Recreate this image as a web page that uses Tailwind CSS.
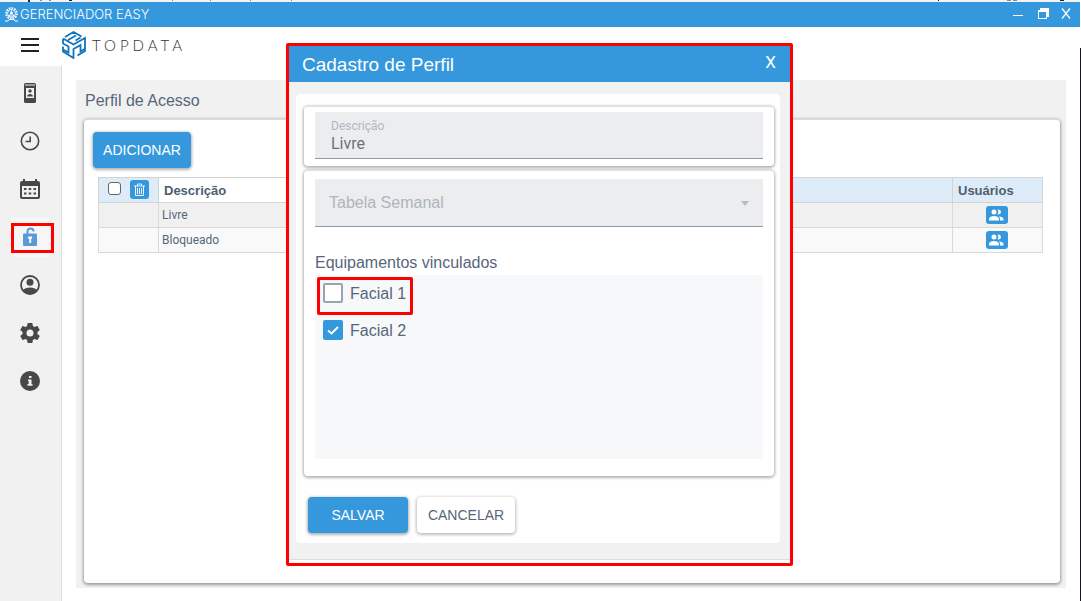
<!DOCTYPE html>
<html lang="pt-BR">
<head>
    <meta charset="UTF-8">
    <meta name="viewport" content="width=device-width, initial-scale=1.0">
    <title>Gerenciador Easy</title>
    <script src="https://cdn.jsdelivr.net/npm/@tailwindcss/browser@4"></script>
</head>
<body class="relative flex flex-col min-h-screen pr-px bg-white text-[#56677a] font-['Liberation_Sans',Arial,sans-serif]">
    <!-- strip of the window behind -->
    <svg class="block h-0.5 w-full bg-[#f4f4f4]" aria-hidden="true">
        <path d="M28 0h2v2h-2zM69 0h3v1h-3zM938 0h1v1h-1zM1060 0h4v1h-4z" fill="#223"/>
        <path d="M40 0h2v1h-2zM49 0h2v1h-2zM172 0h1v1h-1zM210 0h1v1h-1zM250 0h1v1h-1zM291 0h1v1h-1zM1007 0h4v1h-4zM1013 0h4v1h-4z" fill="#889"/>
    </svg>
    <div class="absolute right-0 top-12 bottom-0 w-px bg-[#15151f]"></div>

    <div class="flex items-center justify-between h-[25px] pl-1 pr-2 bg-[#3598dc] text-white">
        <div class="flex items-center gap-px">
            <svg class="size-[15px]" viewBox="0 0 15 15" fill="none" stroke="currentColor">
                <circle cx="7.5" cy="6.5" r="5.5" stroke-width="1.6" stroke-dasharray="1.8 1"/>
                <circle cx="7.5" cy="6.5" r="4"/>
                <path d="M7.5 3.5v2M5 9l1.5-2M10 9L8.500 7M5 9h5"/>
                <circle cx="7.500" cy="6" r="1" fill="currentColor"/>
                <path d="M1 14h3l1-1.500h5l1 1.500h3"/>
            </svg>
            <h1 class="pb-0.5 text-[13px] leading-4 font-light font-[Inter,sans-serif]">GERENCIADOR EASY</h1>
        </div>
        <div class="flex items-center gap-3 pb-0.5">
            <button type="button" aria-label="Minimizar" class="pr-[3px]"><svg class="block w-2.5 h-3" viewBox="0 0 10 12"><path d="M0 7.500h10" stroke="currentColor"/></svg></button>
            <button type="button" aria-label="Restaurar"><svg class="block w-[11px] h-3" viewBox="0 0 11 12"><path d="M2 0h9v9h-2v2H0V2h2zM1 4v6h7V4z" fill="currentColor" fill-rule="evenodd"/></svg></button>
            <button type="button" aria-label="Fechar"><svg class="block size-[11px]" viewBox="0 0 11 11"><path d="M1 .5l8 10M9 .5l-8 10" stroke="currentColor" stroke-width="1.300"/></svg></button>
        </div>
    </div>

    <header class="flex items-center gap-[22px] h-[39px] pl-[21px] pb-[3px]">
        <button type="button" aria-label="Menu" class="text-[#222]">
            <svg class="block w-[18px] h-3.5" viewBox="0 0 18 14"><path d="M0 1h18M0 7h18M0 13h18" stroke="currentColor" stroke-width="2"/></svg>
        </button>
        <div class="flex items-center gap-1.5">
            <svg class="w-[25px] h-7" viewBox="0 0 25 28" fill="none" stroke="#0f75bc" stroke-width="1.800">
                <path d="M4 6l8.500-5 8 4.500M2 8v4.500l5.500 3v6L2 18.500M2 15.500v5L12.500 27v-9.500M2 7.500l10.500 6L24 7v13l-7.500 4.500M7 9l8-4.500M12.500 18l7-4v6.500l4-2.500M14.500 9.500l5-3"/>
            </svg>
            <span class="text-[15px] leading-5 font-light tracking-[4px] text-[#333] font-[Lato,sans-serif]">TOPDATA</span>
        </div>
    </header>

    <div class="flex flex-1">
        <nav class="w-[62px] shrink-0 bg-[#f1f1f1] border-r border-[#dcdcdc] text-[#484848]">
            <ul class="flex flex-col items-center gap-2 pt-[7px] pr-px">
                <li><a href="#" aria-label="Cadastro" class="flex items-center justify-center size-10 rounded">
                    <svg class="size-6" viewBox="0 0 24 24" fill="currentColor" fill-rule="evenodd"><path d="M7.500 2h9A1.500 1.500 0 0 1 18 3.500v17a1.500 1.500 0 0 1-1.500 1.500h-9A1.500 1.500 0 0 1 6 20.500v-17A1.500 1.500 0 0 1 7.500 2zM7 3.500v1h10v-1zM8 7v10h8V7z"/><circle cx="12" cy="10" r="1.700"/><path d="M9 15.500c0-3.500 6-3.500 6 0z"/></svg>
                </a></li>
                <li><a href="#" aria-label="Horários" class="flex items-center justify-center size-10 rounded">
                    <svg class="size-6" viewBox="0 0 24 24" fill="none" stroke="currentColor"><circle cx="12" cy="12" r="8.700" stroke-width="1.600"/><path d="M12.200 7.500v5H7.500" stroke-width="1.600"/></svg>
                </a></li>
                <li><a href="#" aria-label="Calendário" class="flex items-center justify-center size-10 rounded">
                    <svg class="size-6" viewBox="0 0 24 24" fill="currentColor" fill-rule="evenodd"><path d="M5 2h2v2h10V2h2v2h1a2 2 0 0 1 2 2v14a2 2 0 0 1-2 2H4a2 2 0 0 1-2-2V6a2 2 0 0 1 2-2h1zM4 9v11h16V9z"/><path d="M6 11h2.500v2H6zM10.700 11h2.500v2h-2.500zM15.500 11H18v2h-2.500zM6 15.500h2.500v2H6zM10.700 15.500h2.500v2h-2.500zM15.500 15.500H18v2h-2.500z"/></svg>
                </a></li>
                <li class="relative"><a href="#" aria-label="Acesso" class="flex items-center justify-center size-10 rounded bg-[#f6f6f6] text-[#5b9bd5]">
                    <svg class="size-6" viewBox="0 0 24 24" fill="currentColor" fill-rule="evenodd"><path d="M6 8.500h2.500V6.500a4 4 0 0 1 8 0h-2a2 2 0 0 0-4 0v2H18a1 1 0 0 1 1 1V20a1 1 0 0 1-1 1H6a1 1 0 0 1-1-1V9.500a1 1 0 0 1 1-1zM10 11.500v2l1.200.5v4h2V14l.8-.5v-2z"/></svg>
                </a>
                    <div class="absolute left-px top-1.5 w-[43px] h-[30px] border-3 border-[#f00] pointer-events-none"></div>
                </li>
                <li><a href="#" aria-label="Usuário" class="flex items-center justify-center size-10 rounded">
                    <svg class="size-6" viewBox="0 0 24 24"><circle cx="12" cy="12" r="9" fill="none" stroke="currentColor" stroke-width="1.800"/><circle cx="12" cy="9.300" r="3.500" fill="currentColor"/><path d="M4.500 17.500c3-4 12-4 15 0-3 5-12 5-15 0z" fill="currentColor"/></svg>
                </a></li>
                <li><a href="#" aria-label="Configurações" class="flex items-center justify-center size-10 rounded">
                    <svg class="size-6" viewBox="0 0 24 24" fill="currentColor"><path d="M12 15.500A3.500 3.500 0 0 1 8.500 12 3.500 3.500 0 0 1 12 8.500a3.500 3.500 0 0 1 3.500 3.500 3.500 3.500 0 0 1-3.500 3.500m7.430-2.530c.04-.32.070-.64.070-.970s-.030-.660-.070-1l2.110-1.630c.19-.15.24-.42.12-.64l-2-3.460c-.12-.22-.39-.31-.61-.22l-2.490 1c-.52-.39-1.060-.73-1.690-.98l-.37-2.650A.506.506 0 0 0 14 2h-4c-.25 0-.46.18-.5.42l-.37 2.650c-.63.25-1.170.59-1.690.98l-2.490-1c-.22-.09-.49 0-.61.22l-2 3.460c-.13.22-.07.49.12.64L4.570 11c-.04.34-.07.67-.07 1s.03.65.07.97l-2.110 1.660c-.19.15-.25.42-.12.64l2 3.460c.12.22.39.3.61.22l2.490-1.010c.52.4 1.060.74 1.690.99l.37 2.650c.04.24.25.42.5.42h4c.25 0 .46-.18.5-.42l.37-2.650c.63-.26 1.170-.59 1.690-.99l2.490 1.010c.22.08.49 0 .61-.22l2-3.460c.12-.22.07-.49-.12-.64z"/></svg>
                </a></li>
                <li><a href="#" aria-label="Informações" class="flex items-center justify-center size-10 rounded">
                    <svg class="size-6" viewBox="0 0 24 24"><circle cx="12" cy="12" r="10" fill="currentColor"/><path d="M11 7h2.500v2H11zM10 10.500h3.500V15h1v1.700h-5V15h1.200v-3H10z" fill="#f1f1f1"/></svg>
                </a></li>
            </ul>
        </nav>

        <main class="flex flex-1 px-3.5 pt-3.5 pb-[13px]">
            <section class="flex flex-col flex-1 pl-2 pr-1.5 pb-[5px] bg-[#f1f1f1]">
                <h2 class="pl-px pt-[11px] pb-[9px] text-base leading-[19px]">Perfil de Acesso</h2>
                <div class="flex-1 px-2 pt-3 bg-white rounded border-t border-[#ddd] shadow-[0_1px_3px_1px_rgba(0,0,0,0.35)]">
                    <button type="button" class="block ml-px w-[98px] h-9 rounded bg-[#3598dc] text-white text-sm shadow-[0_1px_3px_1px_rgba(0,0,0,0.3)]">ADICIONAR</button>
                    <div class="pl-1.5 pr-[9px] pt-[9px]">
                        <table class="w-full table-fixed border-collapse text-left text-xs">
                            <colgroup>
                                <col class="w-[60px]">
                                <col>
                                <col class="w-[200px]">
                                <col class="w-[90px]">
                            </colgroup>
                            <thead class="text-[13px] leading-5 text-[#4d5e70]">
                                <tr class="h-[25px] bg-[#deebf9]">
                                    <th class="border border-[#d3d3d3] p-0">
                                        <div class="flex items-center gap-[9px] h-6 pb-px pl-2">
                                            <input type="checkbox" aria-label="Selecionar todos" class="size-[13px] ml-px mb-0.5 appearance-none rounded-[3px] border border-[#666] bg-white">
                                            <button type="button" aria-label="Excluir" class="flex items-center justify-center size-[19px] rounded-[3px] bg-[#3598dc] text-white">
                                                <svg class="w-[11px] h-3.5" viewBox="0 0 11 14" fill="none" stroke="currentColor"><path d="M0 3h11M3.500 3V1h4v2M1.500 3v9.500h8V3M3.500 5v6M5.500 5v6M7.500 5v6" stroke-width=".9"/></svg>
                                            </button>
                                        </div>
                                    </th>
                                    <th class="border border-[#d3d3d3] p-0 pl-[5px] pt-px bg-white">Descrição</th>
                                    <th class="border border-[#d3d3d3] p-0"></th>
                                    <th class="border border-[#d3d3d3] p-0 pl-[5px] pt-px">Usuários</th>
                                </tr>
                            </thead>
                            <tbody class="text-xs font-[Roboto,sans-serif]">
                                <tr class="h-[25px] bg-[#f0f0f0]">
                                    <td class="border border-[#d9d9d9] p-0"></td>
                                    <td class="border-y border-l border-[#d9d9d9] p-0 pl-[3px]">Livre</td>
                                    <td class="border-y border-[#d9d9d9] p-0"></td>
                                    <td class="border border-[#d9d9d9] p-0 pr-0.5">
                                        <button type="button" aria-label="Usuários de Livre" class="flex items-center justify-center mx-auto w-[22px] h-[18px] rounded-[3px] bg-[#3598dc] text-white">
                                            <svg class="w-4 h-3" viewBox="0 0 16 12" fill="currentColor"><circle cx="5" cy="3" r="2.500"/><path d="M8.500.7a2.500 2.500 0 1 1 0 4.600c1.200-1.300 1.200-3.300 0-4.600zM0 11.500V10c0-4 10-4 10 0v1.500zM11 11.500V10c0-1.200-.5-2-1.300-2.600 2.500-.1 4.800.8 4.800 2.600v1.500z"/></svg>
                                        </button>
                                    </td>
                                </tr>
                                <tr class="h-[25px] bg-[#f9f9f9]">
                                    <td class="border border-[#d9d9d9] p-0"></td>
                                    <td class="border-y border-l border-[#d9d9d9] p-0 pl-[3px]">Bloqueado</td>
                                    <td class="border-y border-[#d9d9d9] p-0"></td>
                                    <td class="border border-[#d9d9d9] p-0 pr-0.5">
                                        <button type="button" aria-label="Usuários de Bloqueado" class="flex items-center justify-center mx-auto w-[22px] h-[18px] rounded-[3px] bg-[#3598dc] text-white">
                                            <svg class="w-4 h-3" viewBox="0 0 16 12" fill="currentColor"><circle cx="5" cy="3" r="2.500"/><path d="M8.500.7a2.500 2.500 0 1 1 0 4.600c1.200-1.300 1.200-3.300 0-4.600zM0 11.500V10c0-4 10-4 10 0v1.500zM11 11.500V10c0-1.200-.5-2-1.300-2.600 2.500-.1 4.800.8 4.800 2.600v1.500z"/></svg>
                                        </button>
                                    </td>
                                </tr>
                            </tbody>
                        </table>
                    </div>
                </div>
            </section>
        </main>
    </div>

    <!-- modal -->
    <div role="dialog" aria-labelledby="modal_title" class="absolute left-0 right-0.5 top-[43px] mx-auto w-[507px] pb-[3px] bg-white border-3 border-[#f00] rounded-xs">
        <div class="flex items-center justify-between h-9 pl-[13px] pr-3.5 bg-[#3598dc] text-white">
            <h2 id="modal_title" class="pt-px text-[19px] leading-6">Cadastro de Perfil</h2>
            <button type="button" class="pb-1 text-[17px] leading-5 font-[Roboto,sans-serif]">X</button>
        </div>
        <form class="pl-[7px] pr-2.5 pt-3 pb-4 bg-[#f1f1f1] border-b border-[#ddd]">
            <div class="px-2 pt-3 pb-2.5 bg-white rounded">
                <div class="pt-[5px] pb-[7px] px-[11px] mr-[-2px] rounded border-t border-[#e2e2e2] shadow-[0_1px_3px_1px_rgba(0,0,0,0.3)]">
                    <div class="flex flex-col h-[47px] px-4 pt-1.5 bg-[#ecedef] border-b border-[#8a9aab] font-[Roboto,sans-serif]">
                        <label for="descricao" class="text-xs leading-4 text-[#b0b8c2]">Descrição</label>
                        <input id="descricao" type="text" value="Livre" class="w-full h-5 bg-transparent text-base leading-5 text-[#6d7278] outline-none">
                    </div>
                </div>
                <div class="mt-1 pt-2 pb-[17px] px-[11px] mr-[-2px] bg-white rounded border-t border-[#e2e2e2] shadow-[0_1px_3px_1px_rgba(0,0,0,0.3)]">
                    <div class="relative">
                        <select aria-label="Tabela Semanal" class="block w-full h-12 px-3.5 appearance-none bg-[#ecedef] border-b border-[#8a9aab] text-base text-[#adb5bd] outline-none">
                            <option>Tabela Semanal</option>
                        </select>
                        <svg class="absolute right-3.5 top-[22px] w-2 h-[5px] pointer-events-none" viewBox="0 0 8 5"><path d="M0 0h8L4 5z" fill="#b5bcc3"/></svg>
                    </div>
                    <fieldset class="mt-[26px]">
                        <legend class="pb-0.5 text-base leading-5">Equipamentos vinculados</legend>
                        <div class="relative flex flex-col gap-[17px] h-[184px] px-2 py-2 bg-[#f7f8fa]">
                            <label class="flex items-center gap-[7px] h-5 text-base leading-5">
                                <input type="checkbox" class="size-5 appearance-none rounded-xs border-2 border-[#96a5b0] bg-white">
                                <span class="pt-0.5">Facial 1</span>
                            </label>
                            <label class="flex items-center gap-[7px] h-5 text-base leading-5">
                                <span class="relative size-5">
                                    <input type="checkbox" checked class="peer block size-5 appearance-none rounded-xs border-2 border-[#96a5b0] bg-white checked:border-[#3598dc] checked:bg-[#3598dc]">
                                    <svg class="absolute inset-0 size-5 pointer-events-none hidden peer-checked:block" viewBox="0 0 20 20"><path d="M5 10.500l3.500 3L15 7" fill="none" stroke="#fff" stroke-width="2"/></svg>
                                </span>
                                <span class="pt-0.5">Facial 2</span>
                            </label>
                            <div class="absolute left-0.5 top-0.5 w-24 h-[38px] border-3 border-[#f00] rounded-xs pointer-events-none"></div>
                        </div>
                    </fieldset>
                </div>
                <div class="flex gap-[9px] pl-1 mt-[21px] text-sm">
                    <button type="submit" class="w-[100px] h-9 rounded bg-[#3598dc] text-white shadow-[0_1px_3px_1px_rgba(0,0,0,0.3)]">SALVAR</button>
                    <button type="button" class="w-[98px] h-9 rounded bg-white shadow-[0_1px_3px_1px_rgba(0,0,0,0.25)]">CANCELAR</button>
                </div>
            </div>
        </form>
    </div>
</body>
</html>
